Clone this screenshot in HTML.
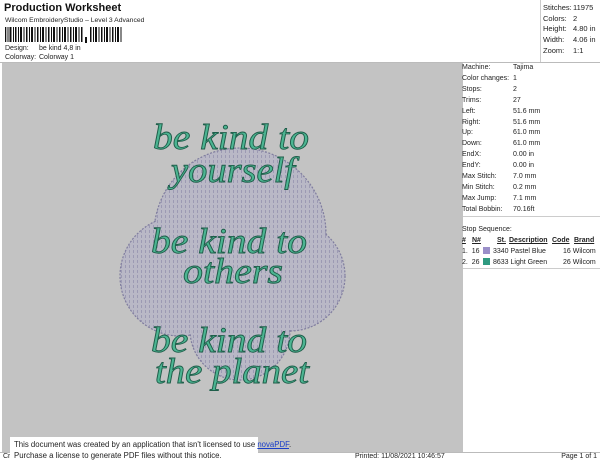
<!DOCTYPE html>
<html><head><meta charset="utf-8"><style>
*{margin:0;padding:0;box-sizing:border-box}
body{width:600px;height:464px;background:#fff;position:relative;overflow:hidden;font-family:"Liberation Sans",sans-serif;font-size:7.5px;color:#222}
.a{position:absolute;white-space:nowrap}
.t{font-family:"Liberation Serif",serif;font-style:italic;font-size:36px;fill:#4cb592;stroke:#1f5e4a;stroke-width:0.9;text-anchor:middle}
</style></head><body>
<div class="a" style="left:4px;top:2px;font-size:11px;font-weight:bold;color:#111">Production Worksheet</div>
<div class="a" style="left:5px;top:17px;font-size:6.8px">Wilcom EmbroideryStudio – Level 3 Advanced</div>
<svg class="a" style="left:5px;top:27px" width="120" height="17">
<g fill="#111">
<rect x="0" y="0" width="1.3" height="15"/><rect x="2.5" y="0" width="1" height="15"/><rect x="4.5" y="0" width="2" height="15"/><rect x="8" y="0" width="1" height="15"/><rect x="10" y="0" width="1.5" height="15"/><rect x="13" y="0" width="1" height="15"/><rect x="15" y="0" width="2" height="15"/><rect x="18.5" y="0" width="1" height="15"/><rect x="21" y="0" width="1.5" height="15"/><rect x="24" y="0" width="1" height="15"/><rect x="26" y="0" width="2" height="15"/><rect x="29.5" y="0" width="1" height="15"/><rect x="32" y="0" width="1.5" height="15"/><rect x="35" y="0" width="1" height="15"/><rect x="37" y="0" width="2" height="15"/><rect x="40.5" y="0" width="1" height="15"/><rect x="43" y="0" width="1.5" height="15"/><rect x="46" y="0" width="1" height="15"/><rect x="48" y="0" width="2" height="15"/><rect x="51.5" y="0" width="1" height="15"/><rect x="54" y="0" width="1.5" height="15"/><rect x="57" y="0" width="1" height="15"/><rect x="59" y="0" width="2" height="15"/><rect x="62.5" y="0" width="1" height="15"/><rect x="65" y="0" width="1.5" height="15"/><rect x="68" y="0" width="1" height="15"/><rect x="70" y="0" width="2" height="15"/><rect x="73.5" y="0" width="1" height="15"/><rect x="76" y="0" width="1.5" height="15"/>
<rect x="80" y="10" width="2" height="6"/>
<rect x="85" y="0" width="1.5" height="15"/><rect x="88" y="0" width="1" height="15"/><rect x="90" y="0" width="2" height="15"/><rect x="93.5" y="0" width="1" height="15"/><rect x="96" y="0" width="1.5" height="15"/><rect x="99" y="0" width="1" height="15"/><rect x="101" y="0" width="2" height="15"/><rect x="104.5" y="0" width="1" height="15"/><rect x="107" y="0" width="1.5" height="15"/><rect x="110" y="0" width="1" height="15"/><rect x="112" y="0" width="2" height="15"/><rect x="115.5" y="0" width="1" height="15"/>
</g></svg>
<div class="a" style="left:5px;top:45px;font-size:7px">Design:</div><div class="a" style="left:39px;top:45px;font-size:7px">be kind 4,8 in</div>
<div class="a" style="left:5px;top:54px;font-size:7px">Colorway:</div><div class="a" style="left:39px;top:54px;font-size:7px">Colorway 1</div>
<div class="a" style="left:0;top:62px;width:600px;height:1px;background:#bbb"></div>
<div class="a" style="left:540px;top:0;width:1px;height:62px;background:#ccc"></div>
<div class="a" style="left:543px;top:3px;line-height:10.7px">Stitches:<br>Colors:<br>Height:<br>Width:<br>Zoom:</div>
<div class="a" style="left:573px;top:3px;line-height:10.7px">11975<br>2<br>4.80 in<br>4.06 in<br>1:1</div>
<div class="a" style="left:2px;top:63px;width:458px;height:389px;background:#c3c3c3"></div>
<svg class="a" style="left:0;top:0" width="460" height="452">
<defs><pattern id="p" width="4" height="5" patternUnits="userSpaceOnUse"><rect width="4" height="5" fill="#b9b8c6"/><rect x="1" y="0" width="1" height="3" fill="#9c9ab3"/></pattern></defs>
<g fill="url(#p)" stroke="#7f7c9e" stroke-width="1.2" stroke-dasharray="2 1.5">
<circle cx="240" cy="234" r="86"/><circle cx="180" cy="276" r="60"/><circle cx="290" cy="276" r="55"/><circle cx="240" cy="330" r="50"/>
</g>
<g fill="url(#p)"><circle cx="240" cy="234" r="85"/><circle cx="180" cy="276" r="59"/><circle cx="290" cy="276" r="54"/><circle cx="240" cy="330" r="49"/></g>
<text class="t" x="231" y="149" textLength="156" lengthAdjust="spacingAndGlyphs">be kind to</text>
<text class="t" x="233" y="182" textLength="124" lengthAdjust="spacingAndGlyphs">yourself</text>
<text class="t" x="229" y="253" textLength="156" lengthAdjust="spacingAndGlyphs">be kind to</text>
<text class="t" x="233" y="283" textLength="100" lengthAdjust="spacingAndGlyphs">others</text>
<text class="t" x="229" y="352" textLength="156" lengthAdjust="spacingAndGlyphs">be kind to</text>
<text class="t" x="232" y="383" textLength="154" lengthAdjust="spacingAndGlyphs">the planet</text>
</svg>
<div class="a" style="left:460px;top:63px;width:140px;height:389px;border-left:3px solid #c3c3c3"></div>
<div class="a" style="left:462px;top:63px;line-height:10.9px;font-size:7px">Machine:<br>Color changes:<br>Stops:<br>Trims:<br>Left:<br>Right:<br>Up:<br>Down:<br>EndX:<br>EndY:<br>Max Stitch:<br>Min Stitch:<br>Max Jump:<br>Total Bobbin:</div>
<div class="a" style="left:513px;top:63px;line-height:10.9px;font-size:7px">Tajima<br>1<br>2<br>27<br>51.6 mm<br>51.6 mm<br>61.0 mm<br>61.0 mm<br>0.00 in<br>0.00 in<br>7.0 mm<br>0.2 mm<br>7.1 mm<br>70.16ft</div>
<div class="a" style="left:463px;top:216px;width:137px;height:1px;background:#ccc"></div>
<div class="a" style="left:462px;top:226px;font-size:7px">Stop Sequence:</div>
<div class="a" style="left:462px;top:237px;font-weight:bold;text-decoration:underline;font-size:7px">#</div>
<div class="a" style="left:472px;top:237px;font-weight:bold;text-decoration:underline;font-size:7px">N#</div>
<div class="a" style="left:497px;top:237px;font-weight:bold;text-decoration:underline;font-size:7px">St.</div>
<div class="a" style="left:509px;top:237px;font-weight:bold;text-decoration:underline;font-size:7px">Description</div>
<div class="a" style="left:552px;top:237px;font-weight:bold;text-decoration:underline;font-size:7px">Code</div>
<div class="a" style="left:574px;top:237px;font-weight:bold;text-decoration:underline;font-size:7px">Brand</div>
<div class="a" style="left:462px;top:246px;line-height:11px;font-size:7px">1.&nbsp; 16<br>2.&nbsp; 26</div>
<div class="a" style="left:483px;top:247px;width:7px;height:7px;background:#9a8fc9"></div>
<div class="a" style="left:483px;top:258px;width:7px;height:7px;background:#2f9a80"></div>
<div class="a" style="left:493px;top:246px;line-height:11px;font-size:7px">3340 Pastel Blue<br>8633 Light Green</div>
<div class="a" style="left:563px;top:246px;line-height:11px;font-size:7px">16 Wilcom<br>26 Wilcom</div>
<div class="a" style="left:463px;top:268px;width:137px;height:1px;background:#ccc"></div>
<div class="a" style="left:0;top:452px;width:600px;height:1px;background:#bbb"></div>
<div class="a" style="left:3px;top:453px;font-size:7px">Cr</div>
<div class="a" style="left:355px;top:453px;font-size:7px">Printed: 11/08/2021 10:46:57</div>
<div class="a" style="right:3px;top:453px;font-size:7px">Page 1 of 1</div>
<div class="a" style="left:10px;top:437px;width:248px;height:27px;background:#fff"></div>
<div class="a" style="left:14px;top:439px;line-height:11px;font-size:7.8px">This document was created by an application that isn't licensed to use <span style="color:#1a3ec9;text-decoration:underline">novaPDF</span>.<br>Purchase a license to generate PDF files without this notice.</div>
</body></html>
